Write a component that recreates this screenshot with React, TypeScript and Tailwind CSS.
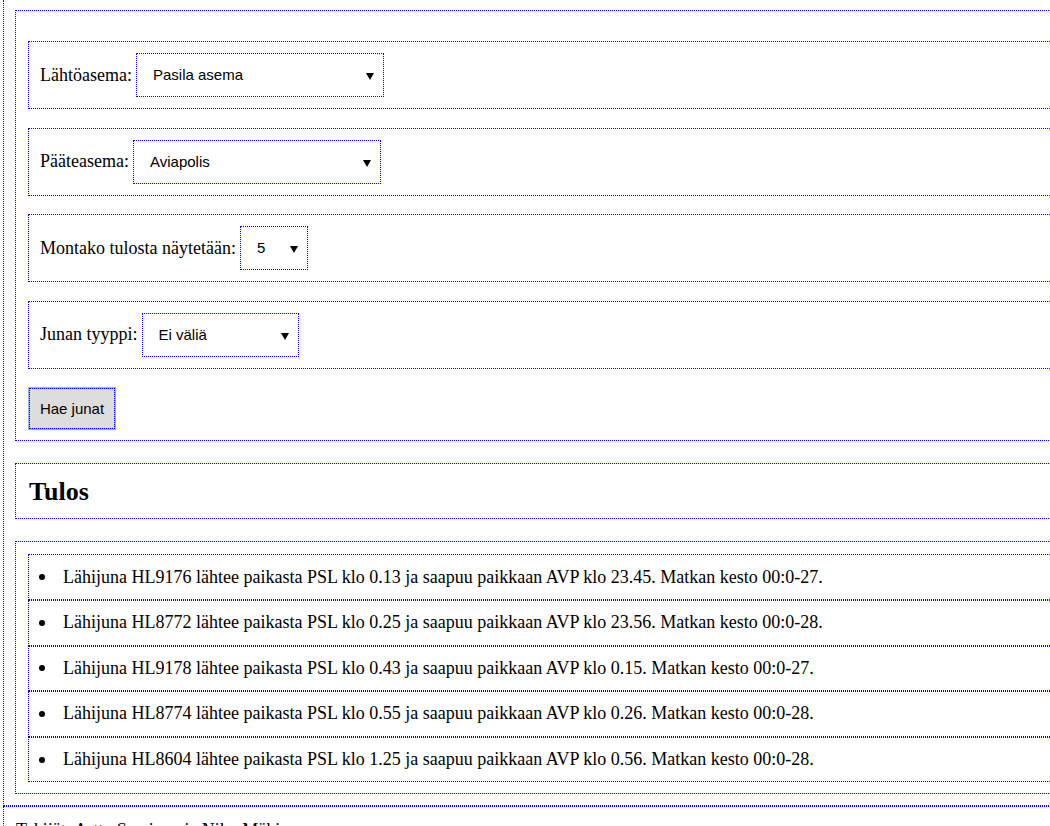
import React, { useState } from 'react';

const serif = "font-['Liberation_Serif','Times_New_Roman',serif]";
const sans = "font-['Liberation_Sans',Arial,sans-serif]";
const dotted = 'border border-dotted border-[#0000ff]';

interface SelectProps { value: string; options: string[]; width: string; onChange: (v: string) => void; }

const Select: React.FC<SelectProps> = ({ value, options, width, onChange }) => (
  <div className={`relative ml-[4px] h-[44px] ${width} ${dotted}`}>
    <select
      value={value}
      onChange={(e) => onChange(e.target.value)}
      className={`${sans} h-full w-full appearance-none bg-transparent pl-[16px] pr-[24px] pt-[1px] text-[15px] text-black outline-none`}
    >
      {options.map((o) => <option key={o} value={o}>{o}</option>)}
    </select>
    <svg className="pointer-events-none absolute right-[9px] top-[19px]" width="8" height="7" viewBox="0 0 8 7">
      <polygon points="0,0 8,0 4,7" fill="#000" />
    </svg>
  </div>
);

const Field: React.FC<{ label: string; children: React.ReactNode }> = ({ label, children }) => (
  <div className={`flex h-[68px] items-center pl-[11px] ${dotted}`}>
    <label className={`${serif} text-[18px] text-black`}>{label}</label>
    {children}
  </div>
);

const trains = [
  'Lähijuna HL9176 lähtee paikasta PSL klo 0.13 ja saapuu paikkaan AVP klo 23.45. Matkan kesto 00:0-27.',
  'Lähijuna HL8772 lähtee paikasta PSL klo 0.25 ja saapuu paikkaan AVP klo 23.56. Matkan kesto 00:0-28.',
  'Lähijuna HL9178 lähtee paikasta PSL klo 0.43 ja saapuu paikkaan AVP klo 0.15. Matkan kesto 00:0-27.',
  'Lähijuna HL8774 lähtee paikasta PSL klo 0.55 ja saapuu paikkaan AVP klo 0.26. Matkan kesto 00:0-28.',
  'Lähijuna HL8604 lähtee paikasta PSL klo 1.25 ja saapuu paikkaan AVP klo 0.56. Matkan kesto 00:0-28.',
];

const App: React.FC = () => {
  const [from, setFrom] = useState('Pasila asema');
  const [to, setTo] = useState('Aviapolis');
  const [count, setCount] = useState('5');
  const [type, setType] = useState('Ei väliä');

  return (
    <div className={`h-[826px] w-[1050px] overflow-hidden bg-white ${serif}`}>
      <div className="ml-[3px] w-[1200px] border-b border-l border-dotted border-[#0000ff] pb-[11px] pl-[11px] pt-[10px]">
        <form className={`flex flex-col gap-[18.6px] px-[12px] pb-[10px] pt-[30px] ${dotted}`} onSubmit={(e) => e.preventDefault()}>
          <Field label="Lähtöasema:">
            <Select value={from} onChange={setFrom} width="w-[248px]" options={['Pasila asema', 'Helsinki asema', 'Tikkurila asema']} />
          </Field>
          <Field label="Pääteasema:">
            <Select value={to} onChange={setTo} width="w-[248px]" options={['Aviapolis', 'Lentoasema', 'Kerava asema']} />
          </Field>
          <Field label="Montako tulosta näytetään:">
            <Select value={count} onChange={setCount} width="w-[68px]" options={['5', '10', '15']} />
          </Field>
          <Field label="Junan tyyppi:">
            <Select value={type} onChange={setType} width="w-[157px]" options={['Ei väliä', 'Lähijuna', 'Kaukojuna']} />
          </Field>
          <div>
            <button
              type="submit"
              className={`${sans} h-[43px] w-[88px] border-2 border-[#8fb4f0] bg-[#dddddd] text-[15px] text-black outline outline-1 outline-dotted outline-[#0000ff] -outline-offset-2`}
            >
              Hae junat
            </button>
          </div>
        </form>

        <div className={`mt-[22px] flex h-[56px] items-center pl-[13px] ${dotted}`}>
          <h2 className="text-[26px] font-bold text-black">Tulos</h2>
        </div>

        <div className={`mt-[22px] px-[12px] pb-[11px] pt-[12px] ${dotted}`}>
          <ul>
            {trains.map((t) => (
              <li key={t} className={`flex h-[45.6px] items-center ${dotted}`}>
                <span className="ml-[10px] mr-[18px] h-[6px] w-[6px] shrink-0 rounded-full bg-black" />
                <span className="text-[18px] text-black">{t}</span>
              </li>
            ))}
          </ul>
        </div>
      </div>

      <footer className="ml-[3px] w-[1200px] border-l border-t border-dotted border-[#0000ff] pl-[12px] pt-[10px] text-[18px] text-black">
        Tekijät: Arttu Saarinen ja Niko Mäkinen
      </footer>
    </div>
  );
};

export default App;
